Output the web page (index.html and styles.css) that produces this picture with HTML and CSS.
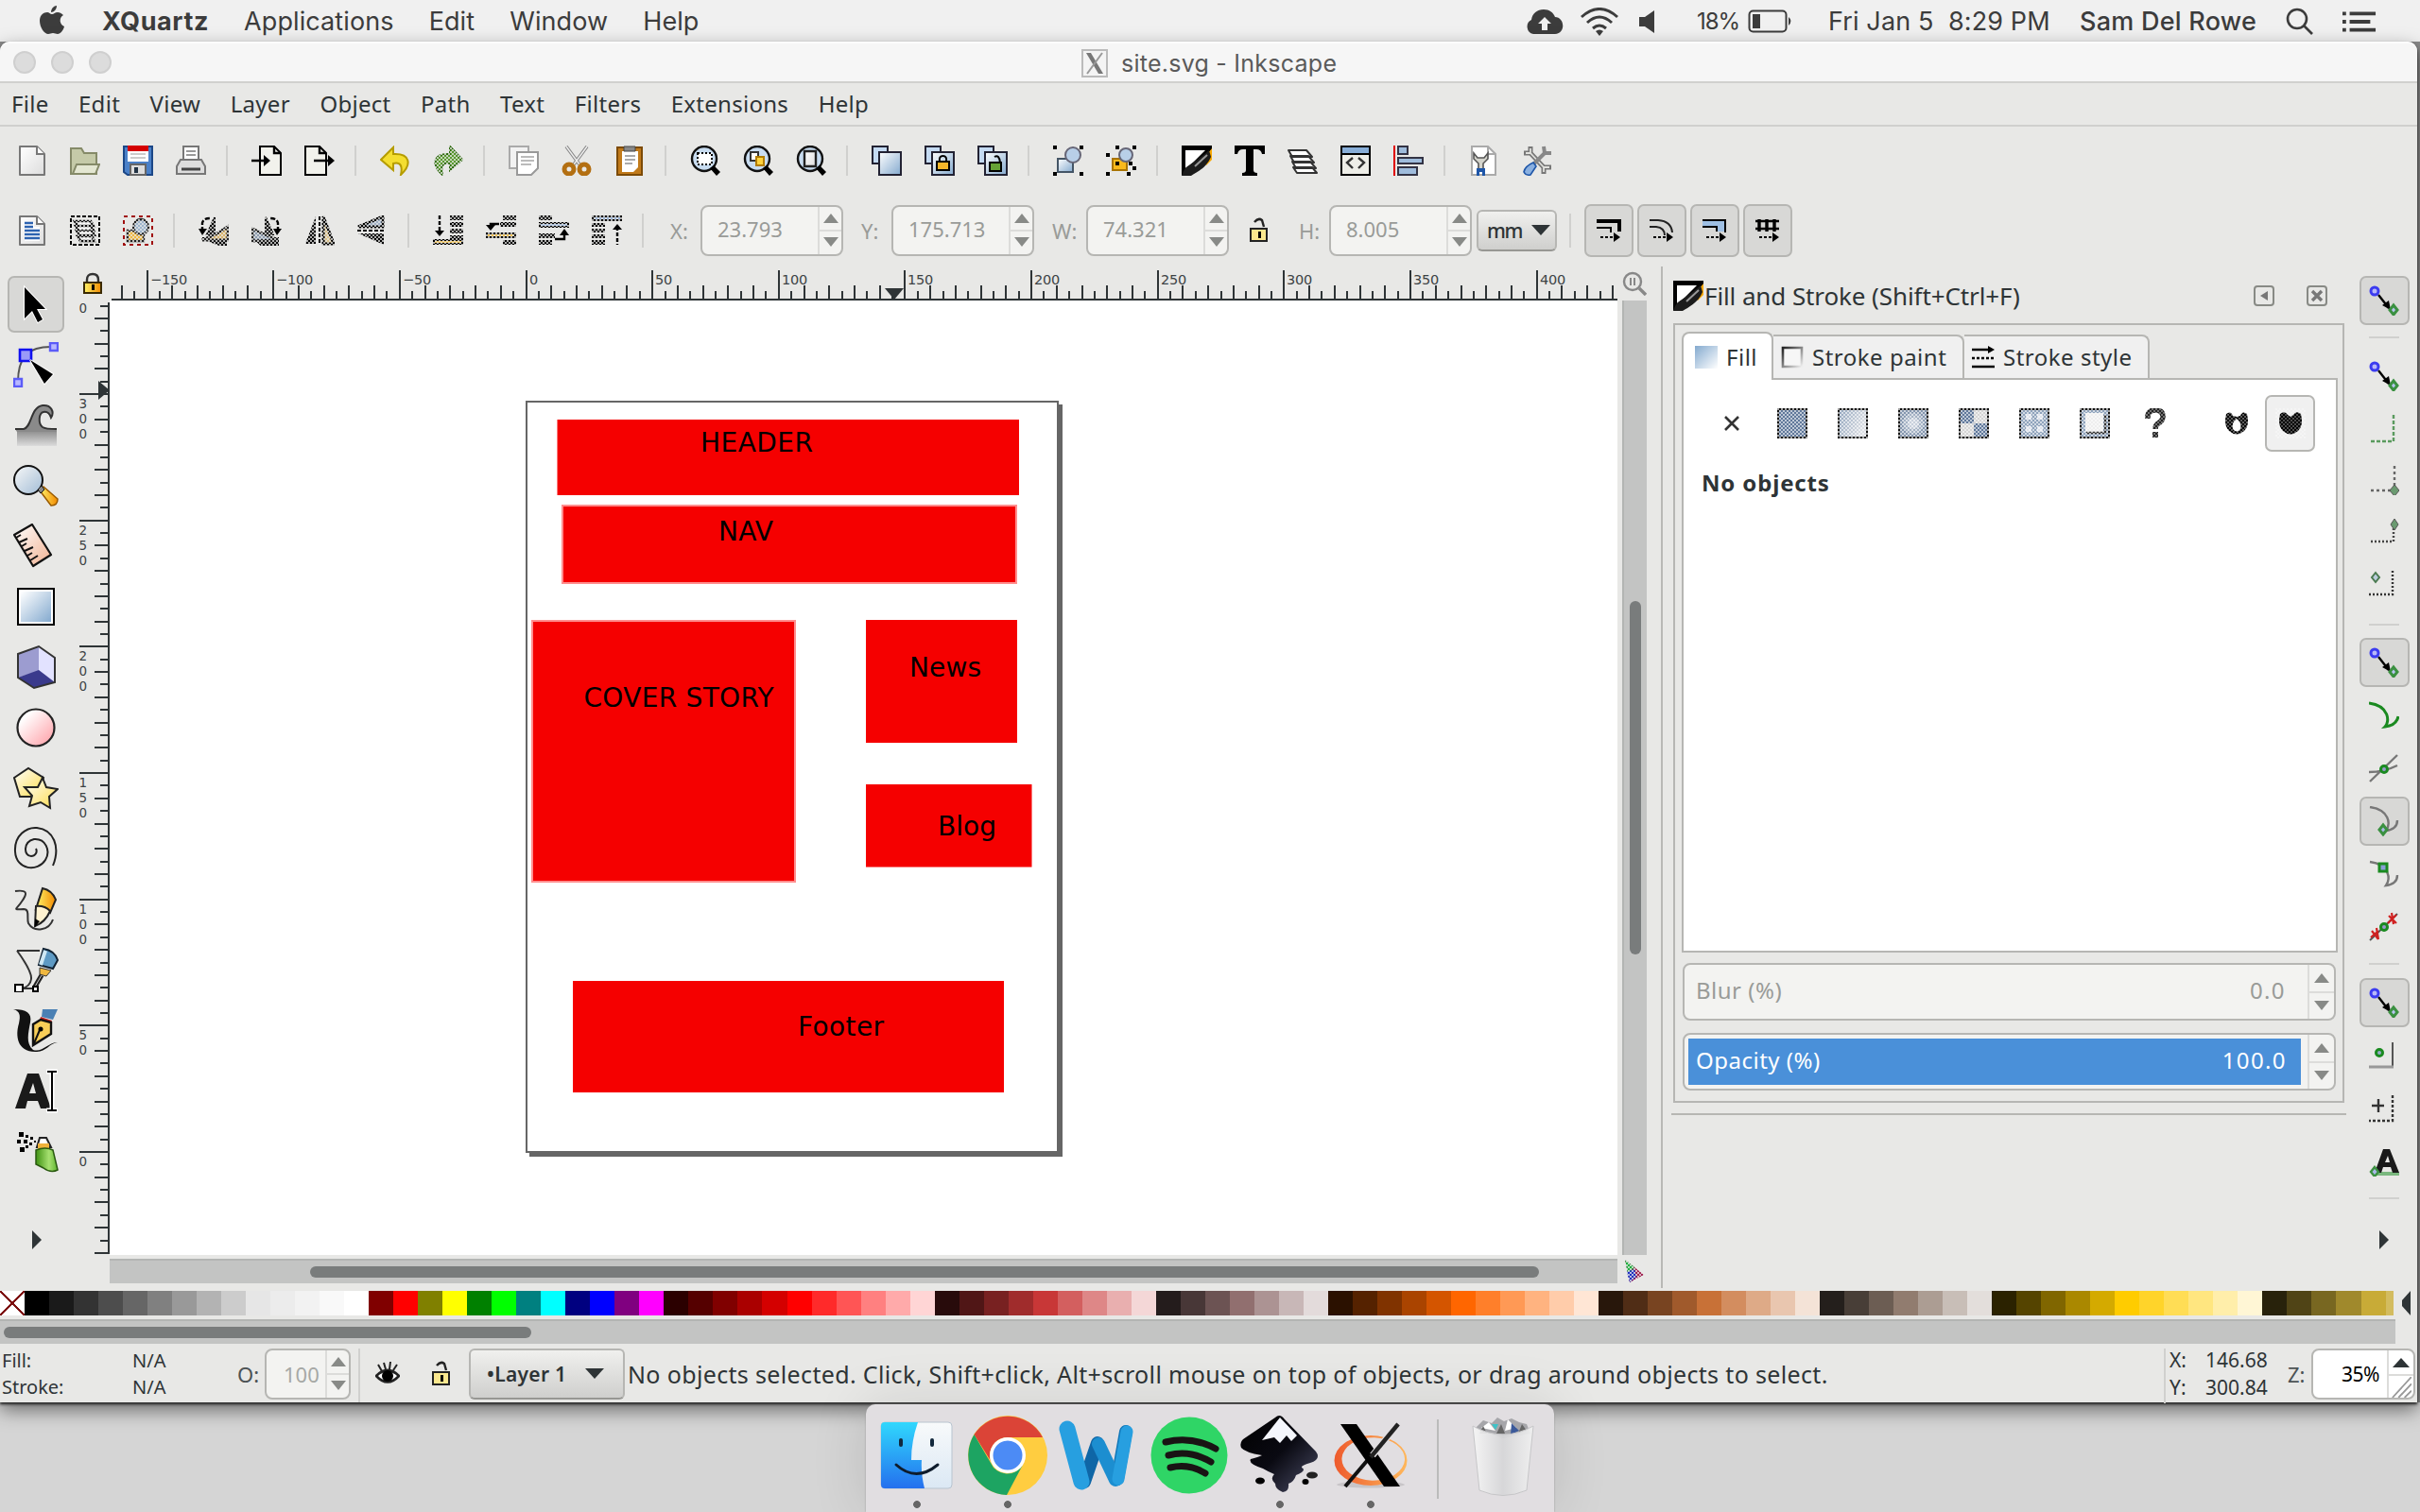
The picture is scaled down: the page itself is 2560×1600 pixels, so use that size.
FILE: index.html
```html
<!DOCTYPE html>
<html lang="en">
<head>
<meta charset="utf-8">
<title>site.svg - Inkscape</title>
<link rel="stylesheet" href="styles.css">
</head>
<body>
<svg class="defs" width="0" height="0" aria-hidden="true">
  <defs>
    <pattern id="dither" width="4" height="4" patternUnits="userSpaceOnUse"><path d="M0 0h2v2H0zM2 2h2v2H2z" fill="#e8e8e6" fill-opacity=".75"/></pattern>
    <pattern id="ditherW" width="4" height="4" patternUnits="userSpaceOnUse"><path d="M0 0h2v2H0zM2 2h2v2H2z" fill="#fff" fill-opacity=".6"/></pattern>
    <linearGradient id="blue" x2="1" y2="1"><stop stop-color="#fff"/><stop offset="1" stop-color="#84aacf"/></linearGradient>
    <linearGradient id="blueR" x1="0" x2="1" y2="1"><stop stop-color="#84aacf"/><stop offset="1" stop-color="#fff"/></linearGradient>
    <linearGradient id="paintGrad" x2="1" y2=".4"><stop stop-color="#8ea2bb"/><stop offset="1" stop-color="#dcdfe4"/></linearGradient>
    <linearGradient id="pink" x2="1" y2="1"><stop offset=".2" stop-color="#fff"/><stop offset="1" stop-color="#ff9aa2"/></linearGradient>
    <linearGradient id="peach" x2="1" y2="1"><stop stop-color="#fff"/><stop offset="1" stop-color="#f0b090"/></linearGradient>
    <linearGradient id="yellow" x2="1" y2="1"><stop stop-color="#fff"/><stop offset="1" stop-color="#fddb4c"/></linearGradient>
    <linearGradient id="orange" x2="1"><stop stop-color="#fff36a"/><stop offset="1" stop-color="#f28a00"/></linearGradient>
    <linearGradient id="green" x2="1"><stop stop-color="#3f9212"/><stop offset=".6" stop-color="#a6e070"/><stop offset="1" stop-color="#5eb52e"/></linearGradient>
    <linearGradient id="frameGrad" x2="1" y2="1"><stop stop-color="#222"/><stop offset="1" stop-color="#eee"/></linearGradient>
    <linearGradient id="wave" x2="0" y2="1"><stop stop-color="#8a8a8a"/><stop offset="1" stop-color="#dcdcdc"/></linearGradient>
    <linearGradient id="paper" x2="1" y2="1"><stop stop-color="#fff"/><stop offset="1" stop-color="#ddd"/></linearGradient>
    <linearGradient id="finderL" x2="0" y2="1"><stop stop-color="#30d8fd"/><stop offset="1" stop-color="#2470ee"/></linearGradient>
    <linearGradient id="finderR" x2="0" y2="1"><stop stop-color="#f8fafb"/><stop offset="1" stop-color="#dbe8f4"/></linearGradient>
    <linearGradient id="ring" x2="1"><stop stop-color="#ee5a2c"/><stop offset="1" stop-color="#ffb85c"/></linearGradient>
    <linearGradient id="ink" x2="1" y2="1"><stop stop-color="#000"/><stop offset=".5" stop-color="#0a0a12"/><stop offset="1" stop-color="#4a4c66"/></linearGradient>
    <linearGradient id="bin" x2="1"><stop stop-color="#f6f6f6"/><stop offset=".5" stop-color="#d6d6d8"/><stop offset="1" stop-color="#f0f0f0"/></linearGradient>
    <symbol id="snap" viewBox="0 0 32 32"><path d="M10 10l11 14" stroke="#000" stroke-width="2.4"/><path d="M23 26l-9-5 7-5z"/><circle cx="6" cy="6" r="4" fill="#b8b8f8" stroke="#3c3cf0" stroke-width="3"/><path d="M26 21l4 5-4 5-4-5z" fill="#b8c4f0" stroke="#3a9040" stroke-width="3"/></symbol>
    <symbol id="doc" viewBox="0 0 32 32"><path d="M3 1h18l8 8v22H3z" fill="url(#paper)" stroke="#777" stroke-width="2" stroke-linejoin="round"/><path d="M21 1v8h8" fill="#fff" stroke="#777" stroke-width="2"/></symbol>
    <symbol id="brush" viewBox="0 0 32 32"><path d="M0 0h32v4L6 26l-6 6z"/><path d="M4 5h21L12 18 4 24z" fill="#fff"/><path d="M32 3v12l-6 6-4-5z" fill="#f8a800"/><path d="M29 5l2 7C26 24 16 28 10 32H0c2-6 4-9 8-11 5-4 12-8 21-16z" fill="#1c1c1c"/><path d="M27 10L14 22" stroke="#999" stroke-width="2"/></symbol>
    <symbol id="lens" viewBox="0 0 32 32"><circle cx="15" cy="14" r="13" fill="#c8dcf0" stroke="#111" stroke-width="2.4"/><path d="M21 24l4-3 7 7-4 4z"/></symbol>
    <symbol id="stack" viewBox="0 0 32 32"><path d="M1 1h16v18H1z" fill="#c4daf2" stroke="#223" stroke-width="2"/><path d="M8 7h23v24H8z" fill="url(#blue)" stroke="#223" stroke-width="2"/></symbol>
    <symbol id="openlock" viewBox="0 0 24 28"><path d="M8 5q4-5 8-2l2 7" fill="none" stroke="#222" stroke-width="2.4"/><path d="M4 12h17v13H4z" fill="#fbe88e" stroke="#222" stroke-width="2"/><path d="M12 15h3v7h-3z"/></symbol>
  </defs>
</svg>

<header class="mac-bar">
  <svg class="apple" viewBox="0 0 26 32"><path d="M18 1c0 4-3 7-6 7 0-4 3-7 6-7z"/><path d="M13 10c2 0 3-2 6-2 2 0 4 1 6 3-5 3-4 10 1 12-1 4-4 8-7 8-2 0-3-1-5-1s-3 1-5 1C5 31 0 24 0 17 0 11 4 8 8 8c2 0 3 2 5 2z"/></svg>
  <nav class="mac-menu"><b>XQuartz</b><span>Applications</span><span>Edit</span><span>Window</span><span>Help</span></nav>
  <div class="mac-status">
    <svg class="cloud" viewBox="0 0 40 28"><path d="M8 27a8 8 0 0 1-2-15C7 5 12 1 19 1c6 0 10 3 12 8 10 0 12 17 0 18z"/><path d="M20 9l-7 7h4v7h6v-7h4z" fill="#f0f0f0"/></svg>
    <svg class="wifi" viewBox="0 0 40 30" fill="none" stroke="#3c3c3c" stroke-width="3"><path d="M1 10q19-17 38 0M7 16q13-12 26 0M13 22q7-6 14 0"/><path d="M20 30l-4-5q4-3 8 0z" fill="#3c3c3c" stroke="none"/></svg>
    <svg class="speaker" viewBox="0 0 16 24"><path d="M0 7h6l10-7v24L6 17H0z"/></svg>
    <span class="percent">18%</span>
    <svg class="battery" viewBox="0 0 48 26"><rect x="1.5" y="1.5" width="39" height="22" rx="4" fill="none" stroke="#3c3c3c" stroke-width="2"/><path d="M5 5h8v15H5zM43 8q5 4 0 9z"/></svg>
    <span class="clock">Fri Jan 5&nbsp; 8:29 PM</span>
    <span class="user">Sam Del Rowe</span>
    <svg class="search" viewBox="0 0 30 30" fill="none" stroke="#3c3c3c" stroke-width="2.6"><circle cx="12" cy="12" r="10"/><path d="M19 19l9 9"/></svg>
    <svg class="list" viewBox="0 0 38 22"><path d="M0 0h4v4H0zM8 0h29v4H8zM0 9h4v4H0zM8 9h23v4H8zM0 18h4v4H0zM8 18h29v4H8z"/></svg>
  </div>
</header>

<main class="window">
  <div class="titlebar">
    <div class="lights"><i></i><i></i><i></i></div>
    <div class="doc-title"><svg viewBox="0 0 28 30"><path d="M1 1h26v28H1z" fill="#f4f4f4" stroke="#bbb" stroke-width="2"/><path d="M5 4h5l13 22h-5z" fill="#777"/><path d="M22 4L6 26" stroke="#999" stroke-width="2"/></svg><span>site.svg - Inkscape</span></div>
  </div>
  <nav class="menubar"><span>File</span><span>Edit</span><span>View</span><span>Layer</span><span>Object</span><span>Path</span><span>Text</span><span>Filters</span><span>Extensions</span><span>Help</span></nav>

  <div class="commands">
    <svg viewBox="0 0 32 32"><use href="#doc"/></svg>
    <svg viewBox="0 0 32 32"><path d="M1 30V3h11l3 5h13v22z" fill="#c5caa8" stroke="#858a68" stroke-width="2"/><path d="M7 20h24l-4 10H3z" fill="#e4e7d2" stroke="#858a68" stroke-width="2"/></svg>
    <svg viewBox="0 0 32 32"><path d="M1 1h30v30H5l-4-3z" fill="#4a80c8" stroke="#1c4787" stroke-width="2"/><path d="M5 2h22v15H5z" fill="#fff"/><path d="M5 0h22v6H5z" fill="#d40000"/><path d="M8 9h16M8 13h16" stroke="#ccc" stroke-width="2"/><path d="M8 20h16v11H8z" fill="#ddd" stroke="#666" stroke-width="2"/><path d="M12 23h4v6h-4z" fill="#234"/></svg>
    <svg viewBox="0 0 32 32"><path d="M8 17V1h16v16z" fill="#fff" stroke="#777" stroke-width="2"/><path d="M11 6h10M11 10h10" stroke="#999" stroke-width="2"/><path d="M5 15h22l4 7v8H1v-8z" fill="#ddd" stroke="#777" stroke-width="2"/><path d="M6 25h20" stroke="#444" stroke-width="3"/></svg>
    <hr>
    <svg viewBox="0 0 32 32"><path d="M9 1h15l7 7v23H9z" fill="#f2f2ec" stroke="#000" stroke-width="2"/><path d="M24 1v7h7M0 16h16" fill="none" stroke="#000" stroke-width="2.4"/><path d="M13 10l7 6-7 6z"/></svg>
    <svg viewBox="0 0 32 32"><path d="M1 1h15l7 7v23H1z" fill="#f2f2ec" stroke="#000" stroke-width="2"/><path d="M16 1v7h7M10 16h17" fill="none" stroke="#000" stroke-width="2.4"/><path d="M25 10l7 6-7 6z"/></svg>
    <hr>
    <svg viewBox="0 0 32 32"><path d="M14 2L1 15l13 11v-7c8-2 10 3 8 12 12-11 10-23-8-22z" fill="#f4de30" stroke="#b59c00" stroke-width="2"/></svg>
    <svg viewBox="0 0 32 32"><path d="M18 1l13 14-13 11v-7c-8-2-10 3-8 12C-2 20 0 8 18 9z" fill="#5a9a30" stroke="#2f6a10" stroke-width="2"/><path d="M0 0h32v32H0z" fill="url(#dither)"/></svg>
    <hr>
    <svg viewBox="0 0 32 32"><path d="M1 1h20v23H1z" fill="#f2f2f2" stroke="#aaa" stroke-width="2"/><path d="M9 7h22v17l-7 7H9z" fill="#fff" stroke="#999" stroke-width="2"/><path d="M13 12h14M13 16h14M13 20h11" stroke="#bbb" stroke-width="2"/></svg>
    <svg viewBox="0 0 32 32"><path d="M5 1l14 19M27 1L13 20" stroke="#888" stroke-width="3.6"/><path d="M5 1l14 19M27 1L13 20" stroke="#eee" stroke-width="1.4"/><circle cx="8" cy="25" r="5" fill="none" stroke="#b36f12" stroke-width="5"/><circle cx="24" cy="25" r="5" fill="none" stroke="#b36f12" stroke-width="5"/></svg>
    <svg viewBox="0 0 32 32"><path d="M3 2h26v29H3z" fill="#c17a1a" stroke="#7c4a05" stroke-width="2"/><path d="M8 6h17v17l-5 5H8z" fill="#fff"/><path d="M10 1h12v5H10z" fill="#888" stroke="#444"/><path d="M11 11h11M11 15h11M11 19h8" stroke="#aaa" stroke-width="2"/></svg>
    <hr>
    <svg viewBox="0 0 32 32"><use href="#lens"/><path d="M8 8h15v12H8z" fill="#fff" stroke="#000" stroke-width="2" stroke-dasharray="2 2"/></svg>
    <svg viewBox="0 0 32 32"><use href="#lens"/><path d="M8 7h8v9H8z" fill="#fff" stroke="#333" stroke-width="2"/><path d="M14 12h8v9h-8z" fill="#ffd23c" stroke="#b27c00" stroke-width="2"/></svg>
    <svg viewBox="0 0 32 32"><use href="#lens"/><path d="M9 6h12v16H9z" fill="url(#paper)" stroke="#222" stroke-width="2.4"/></svg>
    <hr>
    <svg viewBox="0 0 32 32"><use href="#stack"/></svg>
    <svg viewBox="0 0 32 32"><use href="#stack"/><path d="M13 17h13v9H13z" fill="#f4b62a" stroke="#000" stroke-width="2"/><path d="M16 17q-1-6 3.500-6t3.500 6" fill="none" stroke="#000" stroke-width="2"/></svg>
    <svg viewBox="0 0 32 32"><use href="#stack"/><path d="M13 18h12v9H13z" fill="#66a336" stroke="#000" stroke-width="2"/><path d="M18 12q5-3 6 6" fill="none" stroke="#000" stroke-width="2"/></svg>
    <hr>
    <svg viewBox="0 0 32 32"><path d="M5 14h16v14H5z" fill="url(#blue)" stroke="#456" stroke-width="2"/><circle cx="21" cy="10" r="8" fill="#b8cfe8" stroke="#667" stroke-width="2"/><path d="M0 0h4v4H0zM28 0h4v4h-4zM0 28h4v4H0zM28 28h4v4h-4z"/></svg>
    <svg viewBox="0 0 32 32"><path d="M7 14h15v12H7z" fill="#f9b91c" stroke="#a97400" stroke-width="2"/><circle cx="21" cy="10" r="7" fill="#b8cfe8" stroke="#667" stroke-width="2"/><path d="M10 0h4v4h-4zM28 0h4v4h-4zM0 8h4v4H0zM24 17h4v4h-4zM10 17h4v4h-4zM0 28h4v4H0zM22 28h4v4h-4zM28 22h4v4h-4z"/></svg>
    <hr>
    <svg viewBox="0 0 32 32"><use href="#brush"/></svg>
    <svg viewBox="0 0 32 32"><path d="M0 0h32v9h-3q-1-5-6-5h-3v22q0 3 4 3v3H8v-3q4 0 4-3V4H9Q4 4 3 9H0z"/></svg>
    <svg viewBox="0 0 32 32" fill="#fff" stroke="#333" stroke-width="2" stroke-linejoin="round"><path d="M6 23h20l5 6H10zM5 17h19l6 7H9zM3 11h19l6 7H7zM1 5h19l6 7H5z"/></svg>
    <svg viewBox="0 0 32 32"><path d="M1 1h30v30H1z" fill="#eeeee8" stroke="#000" stroke-width="2"/><path d="M2 2h28v6H2z" fill="#88aed8"/><path d="M0 9h32" stroke="#000" stroke-width="2"/><path d="M13 13l-6 5 6 6M19 13l6 5-6 6" fill="none" stroke="#333" stroke-width="2.4"/></svg>
    <svg viewBox="0 0 32 32"><path d="M1 0v32" stroke="#e00000" stroke-width="2"/><path d="M5 1h10v8H5zM5 13h26v6H5zM5 23h20v8H5z" fill="#9fbcdc" stroke="#334" stroke-width="2"/></svg>
    <hr>
    <svg viewBox="0 0 32 32"><path d="M3 1h17l8 8v22H3z" fill="#fff" stroke="#aaa" stroke-width="2"/><path d="M20 1v8h8" fill="none" stroke="#aaa" stroke-width="2"/><path d="M5 8v6l5 5v6h5v-6l5-5V8l-4 5h-7z" fill="#d4d4cc" stroke="#555" stroke-width="1.600"/><path d="M8 24h9v8h-3v-4h-3v4H8z" fill="#1e56a8"/></svg>
    <svg viewBox="0 0 32 32" fill="none"><path d="M9 1v7H2M9 8l14 15M23 30v-7h8" stroke="#777" stroke-width="5"/><path d="M9 3v5H4M9 8l14 15M23 28v-5h6" stroke="#e0e0dc" stroke-width="1.800"/><path d="M23 1l1 7h7M24 8L13 19" stroke="#888" stroke-width="4"/><path d="M12 18l3 4-6 9q-5 1-7-3 1-6 10-10z" fill="#8ab0e0" stroke="#1e56a8" stroke-width="1.600"/></svg>
  </div>

  <div class="controls">
    <svg viewBox="0 0 32 32"><use href="#doc"/><path d="M8 7h10v5h6v15H8z" fill="#fff"/><path d="M8 8h9M8 12h9M8 16h16M8 20h16M8 24h16" stroke="#2c62b0" stroke-width="2.600"/></svg>
    <svg viewBox="0 0 32 32"><path d="M1 1h30v30H1z" fill="none" stroke="#000" stroke-width="2" stroke-dasharray="4 2"/><path d="M8 22h15l3 5H11zM7 16h16l3 5H10zM6 11h16l3 5H9zM5 6h17l3 5H8z" fill="#fff" stroke="#111" stroke-width="2.600"/><path d="M4 4h24v24H4z" fill="url(#dither)"/></svg>
    <svg viewBox="0 0 32 32"><path d="M1 1h30v30H1z" fill="none" stroke="#a01010" stroke-width="2" stroke-dasharray="4 4"/><path d="M5 16h17v11H5z" fill="#f0b840" stroke="#222" stroke-width="2.400"/><circle cx="19" cy="12" r="8" fill="#9db4cc" stroke="#222" stroke-width="2.400"/><path d="M4 4h24v24H4z" fill="url(#dither)"/></svg>
    <hr>
    <svg viewBox="0 0 32 32"><path d="M17 2v18h-8zM4 24h25v7H22z" stroke="#000" stroke-width="2"/><path d="M18 20l13-8v14L4 26z" fill="#d9b36a" stroke="#222" stroke-width="3"/><path d="M0 0h32v32H0z" fill="url(#dither)"/><path d="M4 17V8q1-5 8-5" fill="none" stroke="#000" stroke-width="2.400" stroke-dasharray="5 2"/><path d="M0 14h9l-5 7z"/></svg>
    <svg viewBox="0 0 32 32"><path d="M15 2v18h8zM3 24h25v7H10z" stroke="#000" stroke-width="2"/><path d="M14 20L1 14v13l27-1z" fill="#8c9cb0" stroke="#222" stroke-width="3"/><path d="M0 0h32v32H0z" fill="url(#dither)"/><path d="M28 17V8q-1-5-8-5" fill="none" stroke="#000" stroke-width="2.400" stroke-dasharray="5 2"/><path d="M23 14h9l-5 7z"/></svg>
    <svg viewBox="0 0 32 32"><path d="M12 1v29H1z"/><path d="M20 1v29h11z" fill="#d9c08a" stroke="#000" stroke-width="3"/><path d="M0 0h32v32H0z" fill="url(#dither)"/><path d="M16 1v30" stroke="#000" stroke-width="2" stroke-dasharray="4 2"/></svg>
    <svg viewBox="0 0 32 32"><path d="M27 12V1L1 12z" fill="#9fb0c6" stroke="#000" stroke-width="3"/><path d="M28 19v12L1 19z"/><path d="M0 0h32v32H0z" fill="url(#dither)"/><path d="M0 16h28" stroke="#000" stroke-width="2" stroke-dasharray="4 2"/></svg>
    <hr>
    <svg viewBox="0 0 32 32"><path d="M18 0h14v5H18zM18 7h14v5H18zM18 14h14v5H18zM18 21h14v4H18zM0 25h32v6H0z"/><path d="M2 27h28v2H2z" fill="#f0c050"/><path d="M0 0h32v32H0z" fill="url(#dither)"/><path d="M7 0v18" stroke="#000" stroke-width="2.400" stroke-dasharray="4 2"/><path d="M2 16h10l-5 6z"/></svg>
    <svg viewBox="0 0 32 32"><path d="M18 0h14v5H18zM15 7h17v5H15zM0 18h32v6H0zM18 26h14v5H18z"/><path d="M2 20h28v2H2z" fill="#f0c050"/><path d="M0 0h32v32H0z" fill="url(#dither)"/><path d="M14 9H5v4" fill="none" stroke="#000" stroke-width="2.400"/><path d="M0 10h10l-5 6z"/></svg>
    <svg viewBox="0 0 32 32"><path d="M0 0h14v5H0zM0 7h32v6H0zM0 19h17v5H0zM0 26h14v5H0z"/><path d="M2 9h28v2H2z" fill="#9ab4d8"/><path d="M0 0h32v32H0z" fill="url(#dither)"/><path d="M17 25h10v-5" fill="none" stroke="#000" stroke-width="2.400"/><path d="M22 21h10l-5-7z"/></svg>
    <svg viewBox="0 0 32 32"><path d="M0 0h32v6H0zM0 8h14v4H0zM0 14h14v4H0zM0 20h14v4H0zM0 26h14v5H0z"/><path d="M2 2h28v2H2z" fill="#9ab4d8"/><path d="M0 0h32v32H0z" fill="url(#dither)"/><path d="M27 12v19" stroke="#000" stroke-width="2.400" stroke-dasharray="4 2"/><path d="M22 15h10l-5-6z"/></svg>
    <hr>
    <label class="lx">X:</label><div class="spin"><span>23.793</span><i></i></div>
    <label class="ly">Y:</label><div class="spin"><span>175.713</span><i></i></div>
    <label class="lw">W:</label><div class="spin"><span>74.321</span><i></i></div>
    <svg class="lock" viewBox="0 0 24 28"><use href="#openlock"/></svg>
    <label class="lh">H:</label><div class="spin"><span>8.005</span><i></i></div>
    <div class="unit"><span>mm</span><b class="down"></b></div>
    <hr class="last">
    <div class="toggles">
      <button><svg viewBox="0 0 26 24"><path d="M0 2h24v11" fill="none" stroke="#000" stroke-width="4"/><path d="M0 9h15v5" fill="none" stroke="#000" stroke-width="2"/><path d="M4 19h14" stroke="#000" stroke-width="2" stroke-dasharray="3 2"/><path d="M18 14l7 5-7 5z"/></svg></button>
      <button><svg viewBox="0 0 26 24"><path d="M0 1h9q14 1 15 13M0 8h7q9 1 9 9" fill="none" stroke="#222" stroke-width="2"/><path d="M4 19h14" stroke="#000" stroke-width="2" stroke-dasharray="3 2"/><path d="M18 14l7 5-7 5z"/></svg></button>
      <button><svg viewBox="0 0 26 24"><path d="M0 1h24v12h-8V8H0z" fill="#9fc0e4"/><path d="M0 1h24v13M0 8h15v5" fill="none" stroke="#000" stroke-width="2"/><path d="M4 19h14" stroke="#000" stroke-width="2" stroke-dasharray="3 2"/><path d="M18 14l7 5-7 5z"/></svg></button>
      <button><svg viewBox="0 0 26 24"><path d="M0 2h25M0 10h25" stroke="#000" stroke-width="2.400"/><path d="M4 0v13M12 0v13M20 0v13" stroke="#000" stroke-width="3.400"/><path d="M4 19h14" stroke="#000" stroke-width="2" stroke-dasharray="3 2"/><path d="M18 14l7 5-7 5z"/></svg></button>
    </div>
  </div>

  <div class="work">
    <aside class="toolbox">
      <div class="on"><svg viewBox="0 0 48 48"><path d="M12 6v33l8-8 6 12 5-3-6-11h9z" stroke="#fff" stroke-width="2" paint-order="stroke"/></svg></div>
      <div><svg viewBox="0 0 48 48"><path d="M5 42Q5 24 13 13 24 4 43 5" fill="none" stroke="#555" stroke-width="2"/><path d="M7 8h12v12H7z" fill="#9a9af8" stroke="#1010f0" stroke-width="2.600"/><path d="M39 1h8v8h-8zM1 39h8v8H1z" fill="#b8b8ff" stroke="#5c5cf8" stroke-width="2.400"/><path d="M18 19l24 15-9 10z" stroke="#fff" stroke-width="2" paint-order="stroke"/></svg></div>
      <div><svg viewBox="0 0 48 48"><path d="M4 29h42v17H4z" fill="url(#wave)"/><path d="M2 28h9c9-2 7-23 20-25 9-1 13 7 9 13-2-2-3-6-8-6-5 1-6 11-1 16 3 2 8 2 15 2v3H4z" fill="#8a8a8a"/><path d="M2 28h9c9-2 7-23 20-25 9-1 13 7 9 13-1-3-3-7-8-6-5 1-6 12-1 16 3 2 8 2 15 2" fill="none" stroke="#333" stroke-width="2"/></svg></div>
      <div><svg viewBox="0 0 48 48"><path d="M28 29l4-4 15 13q0 7-7 7z" fill="url(#orange)" stroke="#9a5a00" stroke-width="1.500"/><circle cx="16" cy="18" r="15" fill="url(#blue)" fill-opacity=".7" stroke="#111" stroke-width="2"/><path d="M26 28l4-4 3 4-4 4z" fill="#888" stroke="#111"/></svg></div>
      <div><svg viewBox="0 0 48 48"><path d="M1 12L20 1l20 32-19 12z" fill="url(#peach)" stroke="#111" stroke-width="2.200" stroke-linejoin="round"/><path d="M3 15l5-3M6 20l9-4M9 24l5-3M12 29l9-4M15 34l5-3M18 39l8-5" stroke="#111" stroke-width="2"/></svg></div>
      <div><svg viewBox="0 0 48 48"><path d="M5 5h38v38H5z" fill="#fff" stroke="#000" stroke-width="2"/><path d="M8 8h32v32H8z" fill="url(#blue)"/></svg></div>
      <div><svg viewBox="0 0 48 48"><path d="M5 10L27 2v26L5 35z" fill="#9c9cd0"/><path d="M27 2l17 12v26L27 28z" fill="#e2e2ff"/><path d="M5 35l22-8 17 13-22 6z" fill="#3a3a8c"/><path d="M5 10L27 2l17 12v26L22 46 5 35z" fill="none" stroke="#333" stroke-width="2"/></svg></div>
      <div><svg viewBox="0 0 48 48"><circle cx="24" cy="24" r="19.500" fill="url(#pink)" stroke="#222" stroke-width="2.200"/></svg></div>
      <div><svg viewBox="0 0 48 48"><path d="M1 13L16 3l16 10-6 20H7z" fill="url(#yellow)" stroke="#222" stroke-width="2"/><path d="M31 13l4 10 12 2-9 8 1 12-10-6-12 4 3-11-8-9h14z" fill="url(#yellow)" stroke="#222" stroke-width="2"/></svg></div>
      <div><svg viewBox="0 0 48 48" fill="none" stroke="#222" stroke-width="2"><path d="M24 24c2 4-1 8-5 8-8 0-9-15 3-18 12-1 18 12 12 22-8 13-31 11-32-9C1 10 14 1 25 2c18 2 25 20 17 40"/></svg></div>
      <div><svg viewBox="0 0 48 48"><path d="M2 5c15-2 12 4 7 11-5 8-11 9 2 8 7 0 3 10 5 15 6 10 22 8 26-4" fill="none" stroke="#333" stroke-width="2"/><path d="M31 2q10 2 14 12l-6 14q-8-6-15-4z" fill="url(#orange)" stroke="#222" stroke-width="2"/><path d="M24 21q9-1 15 5-5 12-16 16z" fill="#fff2cf" stroke="#222" stroke-width="2"/><path d="M23 34l5 3-5 6z"/></svg></div>
      <div><svg viewBox="0 0 48 48"><path d="M4 4h24M4 4q16 22 15 30-1 8-10 10h14" fill="none" stroke="#333" stroke-width="2"/><path d="M32 2q12 2 15 12l-5 9-15-4z" fill="#5e9ac4" stroke="#123" stroke-width="2"/><path d="M34 4l-5 15" stroke="#cfe8f4" stroke-width="4"/><path d="M28 22l12 3-5 6-7-2z" fill="#f0b840" stroke="#333"/><path d="M30 30l-7 12" stroke="#222" stroke-width="5"/><path d="M30 30l-7 12" stroke="#ccc"/><path d="M2 40h8v8H2zM21 42h5v5h-5z" fill="#fff" stroke="#000" stroke-width="2"/></svg></div>
      <div><svg viewBox="0 0 48 48"><path d="M0 2c14 0 20 4 18 14-2 11-5 22 3 29 10 3 16-8 26-8-9 1-12 10-22 10C4 48 2 30 6 17 8 8 7 4 0 2z" fill="#111"/><path d="M31 2h16l-5 11-12-3z" fill="#4a80b4"/><path d="M29 10l12 4-2 4-11-4z" fill="#c02020"/><path d="M21 40V18l8-5 11 3v12z" fill="#f8ce58" stroke="#111" stroke-width="2.400"/><path d="M22 38l6-14" stroke="#111" stroke-width="2"/><circle cx="29" cy="23" r="2.500"/></svg></div>
      <div><svg viewBox="0 0 48 48"><path d="M2 43L15 6h12l13 37H29l-3-8H15l-2 8zM17 27h7l-3-11z" fill="#1a1a1a" fill-rule="evenodd"/><path d="M41 5v40M35 4h12M35 45h12" stroke="#fff" stroke-width="5"/><path d="M41 5v40M36 4h10M36 45h10" stroke="#000" stroke-width="2"/></svg></div>
      <div><svg viewBox="0 0 48 48"><path d="M6 4h5v5H6zM4 12h4v4H4zM7 20h5v5H7zM11 12h4v4h-4zM13 7h3v3h-3zM18 9h3v3h-3zM17 15h3v3h-3zM13 18h3v3h-3zM22 13h2v2h-2z"/><path d="M25 20l3-10h7l5 10z" fill="#fff" stroke="#222" stroke-width="2"/><path d="M26 16h12v7H26z" fill="#f0b23c"/><path d="M24 23q10-4 18 0l5 21q-7 4-15-2l-8-4z" fill="url(#green)" stroke="#2a5a10" stroke-width="1.500"/></svg></div>
      <b class="right"></b>
    </aside>

    <section class="canvas-area">
      <div class="corner"><svg viewBox="0 0 22 24"><path d="M5 12V8q0-6 6-6t6 6v4" fill="none" stroke="#333" stroke-width="2.400"/><path d="M2 11h18v11H2z" fill="url(#orange)" stroke="#3a2a00" stroke-width="2"/><path d="M10 13h3v6h-3z"/></svg></div>
      <svg class="ruler-h" viewBox="116 282 1595 36"><g id="ticks-h"></g><path d="M118 316h1593v2H118z"/><path d="M936 305h20l-10 12z"/></svg>
      <div class="corner zoom"><svg viewBox="0 0 26 26" fill="none" stroke="#888"><circle cx="11" cy="11" r="9" stroke-width="2.400"/><path d="M18 18l7 7" stroke-width="3.400"/><path d="M9 7v8M13 7v8" stroke-width="2"/></svg></div>
      <svg class="ruler-v" viewBox="76 318 40 1010"><g id="ticks-v"></g><path d="M114 320h2v1007h-2z"/><path d="M104 403v20l12-10z"/></svg>
      <svg class="canvas" viewBox="116 318 1595 1010">
        <path d="M560 428h564v796H560z" fill="#666"/>
        <path d="M557 425h562v794H557z" fill="#fff" stroke="#666" stroke-width="2"/>
        <g fill="#f50000">
          <path d="M589.500 444h488.500v80h-488.500z"/>
          <path d="M595 535h481v82h-481z"/>
          <path d="M563 657h278v276h-278z"/>
          <path d="M916 656h160v130h-160z"/>
          <path d="M916 830h175.500v87.500h-175.500z"/>
          <path d="M606 1038h456v118h-456z"/>
        </g>
        <path d="M595 535h480v82h-480zM563 657h278v276h-278z" fill="none" stroke="#ff8e8e" stroke-width="2"/>
        <g class="art">
          <text x="741" y="478" textLength="119">HEADER</text>
          <text x="760" y="572" textLength="58">NAV</text>
          <text x="617.500" y="748" textLength="201">COVER STORY</text>
          <text x="962" y="716" textLength="76">News</text>
          <text x="992" y="884" textLength="62">Blog</text>
          <text x="844" y="1096" textLength="91">Footer</text>
        </g>
      </svg>
      <div class="vscroll"><i></i></div>
      <div class="hscroll"><i></i></div>
      <div class="cms"><svg viewBox="0 0 22 26"><path d="M1 1l20 16L6 25z" fill="#a02050"/><path d="M1 1l10 8-7 7z" fill="#20b040"/><path d="M3 14l8-3 2 8-7 6z" fill="#2030c0"/><path d="M0 0h22v26H0z" fill="url(#dither)"/></svg></div>
    </section>

    <section class="dock-panel">
      <div class="panel-title"><svg viewBox="0 0 32 32"><use href="#brush"/></svg><span>Fill and Stroke (Shift+Ctrl+F)</span>
        <svg class="pbtn" viewBox="0 0 22 22"><rect x="1" y="1" width="20" height="20" rx="3" fill="none" stroke="#888a85" stroke-width="2"/><path d="M15 6v10l-8-5z" fill="#777"/></svg>
        <svg class="pbtn" viewBox="0 0 22 22"><rect x="1" y="1" width="20" height="20" rx="3" fill="none" stroke="#888a85" stroke-width="2"/><path d="M6 6l10 10M16 6L6 16" stroke="#777" stroke-width="3.400"/></svg></div>
      <div class="frame">
        <div class="tabs">
          <div class="tab active"><svg viewBox="0 0 24 24"><path d="M0 0h24v24H0z" fill="url(#blueR)"/></svg><span>Fill</span></div>
          <div class="tab"><svg viewBox="0 0 24 24"><path d="M2 2h20v20H2z" fill="#f6f6f6" stroke="url(#frameGrad)" stroke-width="2.600"/></svg><span>Stroke paint</span></div>
          <div class="tab"><svg viewBox="0 0 24 24"><path d="M0 4h18M0 22h24" stroke="#000" stroke-width="2.400"/><path d="M0 13h24" stroke="#000" stroke-width="2.400" stroke-dasharray="3 2"/><path d="M17 0l7 4-7 4z"/></svg><span>Stroke style</span></div>
        </div>
        <div class="page">
          <div class="paints">
            <svg viewBox="0 0 32 32"><path d="M9 9l14 14M23 9L9 23" stroke="#333" stroke-width="2.600"/></svg>
            <svg viewBox="0 0 32 32"><path d="M1 1h30v30H1z" fill="#60789a" stroke="#111" stroke-width="2"/><path d="M0 0h32v32H0z" fill="url(#ditherW)"/></svg>
            <svg viewBox="0 0 32 32"><path d="M1 1h30v30H1z" fill="url(#paintGrad)" stroke="#111" stroke-width="2"/><path d="M0 0h32v32H0z" fill="url(#ditherW)"/></svg>
            <svg viewBox="0 0 32 32"><path d="M1 1h30v30H1z" fill="#8496ae" stroke="#111" stroke-width="2"/><circle cx="16" cy="16" r="11" fill="#a4b2c4"/><circle cx="16" cy="16" r="6" fill="#c8d0dc"/><path d="M0 0h32v32H0z" fill="url(#ditherW)"/></svg>
            <svg viewBox="0 0 32 32"><path d="M1 1h30v30H1z" fill="#d4d4d4" stroke="#111" stroke-width="2"/><path d="M2 2h14v14H2zM16 16h14v14H16z" fill="#60789a"/><path d="M0 0h32v32H0z" fill="url(#ditherW)"/></svg>
            <svg viewBox="0 0 32 32"><path d="M1 1h30v30H1z" fill="#8ea2bb" stroke="#111" stroke-width="2"/><path d="M7 6h6v6H7zM19 6h6v6h-6zM7 19h6v6H7zM19 19h6v6h-6z" fill="#dde2ea"/><path d="M0 0h32v32H0z" fill="url(#ditherW)"/></svg>
            <svg viewBox="0 0 32 32"><path d="M1 1h30v30H1z" fill="#8ea2bb" stroke="#111" stroke-width="2"/><path d="M6 5h19v20H6z" fill="#eee"/><path d="M7 26h20V7" fill="none" stroke="#333" stroke-width="2.400"/><path d="M0 0h32v32H0z" fill="url(#ditherW)"/></svg>
            <svg viewBox="0 0 32 32"><path d="M8 11V8q1-6 8-6 8 0 8 7 0 4-5 7-3 2-3 6" fill="none" stroke="#222" stroke-width="5.600"/><path d="M13 25h6v6h-6z" fill="#222"/><path d="M0 0h32v32H0z" fill="url(#ditherW)" opacity=".6"/></svg>
            <svg class="gap" viewBox="0 0 32 32"><path d="M5 6q5-4 7 2l4 1 4-1q2-6 7-2 3 12-3 18-8 7-16 0Q2 18 5 6zM16 11q-6 5-4 11 4 5 8 0 2-6-4-11z" fill="#000" fill-rule="evenodd"/><path d="M0 0h32v32H0z" fill="url(#ditherW)" opacity=".6"/></svg>
            <button><svg viewBox="0 0 32 32"><path d="M5 6q5-4 8 1l3 2 3-2q3-5 8-1 3 12-3 18-8 7-16 0Q2 18 5 6z" fill="#000"/><path d="M0 0h32v32H0z" fill="url(#ditherW)" opacity=".5"/></svg></button>
          </div>
          <b class="none">No objects</b>
        </div>
        <div class="slider"><div class="bar"><span>Blur (%)</span><span>0.0</span></div><i></i></div>
        <div class="slider opacity"><div class="bar"><span>Opacity (%)</span><span>100.0</span></div><i></i></div>
      </div>
      <div class="rule"></div>
    </section>

    <aside class="snapbar">
      <button><svg viewBox="0 0 32 32"><use href="#snap"/></svg></button>
      <hr>
      <div class="nodes">
        <svg viewBox="0 0 32 32"><use href="#snap"/></svg>
        <svg viewBox="0 0 32 32"><path d="M26 2v28H0" fill="none" stroke="#5a9a5e" stroke-width="2.400" stroke-dasharray="4 2"/></svg>
        <svg viewBox="0 0 32 32"><path d="M27 1v26H0" fill="none" stroke="#666" stroke-width="2.400" stroke-dasharray="3 3"/><path d="M27 21l5 6-5 6-5-6z" fill="#6a9a70" stroke="#555"/></svg>
        <svg viewBox="0 0 32 32"><path d="M26 8v18H0" fill="none" stroke="#444" stroke-width="2.400" stroke-dasharray="2 2"/><path d="M27 2l4 6-4 6-4-6z" fill="#6a9a70" stroke="#555"/></svg>
        <svg viewBox="0 0 32 32"><path d="M25 2v25H0" fill="none" stroke="#333" stroke-width="2.400" stroke-dasharray="2 2"/><path d="M7 4l4 5-4 5-4-5z" fill="#bcd" stroke="#4a7a50" stroke-width="2"/></svg>
      </div>
      <hr class="wide">
      <button><svg viewBox="0 0 32 32"><use href="#snap"/></svg></button>
      <svg viewBox="0 0 32 32"><path d="M0 3c22 3 22 20 17 25 10-1 13-6 14-11" fill="none" stroke="#1a8a20" stroke-width="3"/></svg>
      <svg viewBox="0 0 32 32"><path d="M1 30L30 2M0 20q16 0 30-7" fill="none" stroke="#777" stroke-width="2.400"/><circle cx="16" cy="17" r="3.500" fill="#99c" stroke="#1a8a20" stroke-width="3"/></svg>
      <button><svg viewBox="0 0 32 32"><path d="M1 1c21 3 22 18 17 25 8-1 12-5 12-11" fill="none" stroke="#777" stroke-width="2.400"/><path d="M15 20l4 5-4 5-4-5z" fill="#aab8e8" stroke="#3a9040" stroke-width="3"/></svg></button>
      <svg viewBox="0 0 32 32"><path d="M1 3c21 3 22 18 17 25 8-1 12-5 12-11" fill="none" stroke="#777" stroke-width="2.400"/><path d="M11 5h8v8h-8z" fill="#8aa0d8" stroke="#1a8a20" stroke-width="3"/></svg>
      <svg viewBox="0 0 32 32"><path d="M1 30L30 2" stroke="#555" stroke-width="2"/><path d="M3 20l7 9M2 27l8-7M8 17l2 12M21 4l8 8M20 12l9-9M24 1l2 12" stroke="#d02020" stroke-width="2.200"/><circle cx="16" cy="16" r="3.500" fill="#99c" stroke="#1a8a20" stroke-width="3"/></svg>
      <hr>
      <button><svg viewBox="0 0 32 32"><use href="#snap"/></svg></button>
      <svg viewBox="0 0 32 32"><path d="M25 2v27" stroke="#555" stroke-width="2"/><path d="M0 28h26" stroke="#999" stroke-width="3"/><circle cx="11" cy="13" r="3.500" fill="#9ac" stroke="#1a8a20" stroke-width="3"/></svg>
      <svg viewBox="0 0 32 32"><path d="M25 2v27H0" fill="none" stroke="#333" stroke-width="2.400" stroke-dasharray="3 2"/><path d="M3 13h13M10 6v14" stroke="#333" stroke-width="2.400"/></svg>
      <svg viewBox="0 0 32 32"><path d="M4 27h28v4H4z" fill="#7ab87e"/><path d="M6 28L15 3h7l10 25h-7l-2-6h-8l-2 6zM17 17h5l-2-7z" fill="#1a1a1a" fill-rule="evenodd"/><path d="M6 22l4 5-4 5-4-5z" fill="#aab8e8" stroke="#3a9040" stroke-width="2.400"/></svg>
      <hr>
      <b class="right"></b>
    </aside>
  </div>

  <div class="palette"><div id="swatches"></div><b class="left"></b></div>
  <div class="pal-scroll"><i></i></div>

  <footer class="status">
    <div class="style-ind"><span>Fill:</span><span>N/A</span><span>Stroke:</span><span>N/A</span></div>
    <label class="lo">O:</label><div class="spin small"><span>100</span><i></i></div>
    <hr>
    <svg class="eye" viewBox="0 0 26 28"><path d="M1 16q12-12 24 0-12 13-24 0z" fill="#fff" stroke="#222" stroke-width="2.600"/><circle cx="13" cy="16" r="6"/><path d="M3 4l4 7M9 2l2 7M16 1l-1 8M23 4l-4 6" stroke="#222" stroke-width="2"/></svg>
    <svg class="lock2" viewBox="0 0 24 28"><use href="#openlock"/></svg>
    <div class="layer"><b>•Layer 1</b><b class="down"></b></div>
    <span class="message">No objects selected. Click, Shift+click, Alt+scroll mouse on top of objects, or drag around objects to select.</span>
    <div class="coords"><span>X:</span><span>146.68</span><span>Y:</span><span>300.84</span></div>
    <label class="lz">Z:</label>
    <div class="zoom-field"><span>35%</span><i><b class="up"></b><svg viewBox="0 0 24 24"><path d="M2 24L24 0M9 24L24 8M16 24l8-8" stroke="#999" stroke-width="2"/></svg></i></div>
  </footer>
</main>

<div class="desktop">
  <div class="dock">
    <svg class="app run" viewBox="0 0 88 96"><rect x="6" y="8" width="75" height="70" rx="4" fill="url(#finderR)" stroke="#b8c4d0"/><path d="M10 8h35q-7 20-7 40h11q-1 14 3 30H10q-4 0-4-4V12q0-4 4-4z" fill="url(#finderL)"/><path d="M27 27v5M60 27v5" stroke="#12283c" stroke-width="4" stroke-linecap="round"/><path d="M22 53q21 19 44 0" fill="none" stroke="#0e1c2c" stroke-width="3" stroke-linecap="round"/></svg>
    <svg class="app run" viewBox="0 0 88 96"><circle cx="44" cy="43" r="42" fill="#ffcd40"/><path d="M8.500 21A42 42 0 0 1 81 24H44a19 19 0 0 0-18 25z" fill="#db4437"/><path d="M8.500 21A42 42 0 0 0 43 85l17-32a19 19 0 0 1-34-2z" fill="#1da462"/><circle cx="44" cy="43" r="19" fill="#fff"/><circle cx="44" cy="43" r="15.500" fill="#4c8bf5"/></svg>
    <svg class="app" viewBox="0 0 88 96" fill="none" stroke-linecap="round" stroke-linejoin="round"><path d="M29 71l14-41" stroke="#0f66a6" stroke-width="14"/><path d="M64 68l9-50" stroke="#1176b8" stroke-width="14"/><path d="M44 31l18 38" stroke="#1c8ed0" stroke-width="14"/><path d="M11 15l15 56" stroke="#279fe0" stroke-width="17"/><path d="M74 18l-9 50" stroke="#279fe0" stroke-width="13"/></svg>
    <svg class="app" viewBox="0 0 88 96"><circle cx="44" cy="43" r="40.500" fill="#2fd566"/><path d="M19 29q27-7 53 7M22 43q23-6 45 7M24 56q19-5 37 6" fill="none" stroke="#191414" stroke-linecap="round" stroke-width="7"/></svg>
    <svg class="app run" viewBox="0 0 88 96"><path d="M39 3q5-5 10 2l33 34q6 8-6 12-10 3-9 5 6 3-6 8-2 7-8 9 1 8-6 9-8-3-8-9-6-5-1-10-7-3-12-6-16-5-13-10 8-2 12-4-18-3-22-8-2-5 2-9z" fill="url(#ink)"/><path d="M44 3l18 19-6 6-5-6-7 8-6-6-13 3z" fill="#f4f6fc"/><ellipse cx="23" cy="70" rx="5" ry="3.500"/><ellipse cx="78" cy="64" rx="6" ry="3.500" fill="#222"/><ellipse cx="71" cy="71" rx="3.500" ry="3"/></svg>
    <svg class="app run" viewBox="0 0 88 96"><ellipse cx="44" cy="74" rx="36" ry="3.500" fill="#c8c5c8"/><path d="M5.500 48.500a38.500 26.500 0 1 1 77 0a38.500 26.500 0 1 1-77 0zM13.500 46a33 22.500 0 0 0 66.500 2a33 22.500 0 0 0-66.500-2z" fill="url(#ring)" fill-rule="evenodd"/><path d="M73 10L17 76" stroke="#111" stroke-width="4"/><path d="M12 10h17l46 66H58z" fill="#000"/><path d="M73 10L46 43" stroke="#e1dee1" stroke-width="7"/><path d="M73 10L44 45" stroke="#222" stroke-width="4.500"/></svg>
    <i></i>
    <svg class="trash" viewBox="0 0 70 96"><path d="M6 14l8-8 9 3 6-6 7 4 8-3 8 4 8 2 4 10-30 5z" fill="#a6a6aa"/><path d="M12 14l8-6 7 9zM40 5l9 9-12 3z" fill="#fff"/><path d="M44 9l8 8-9 4z" fill="#3c5a9a"/><path d="M23 10h7l-3 6z" fill="#3fc3c8"/><path d="M14 12l4 8h-8zM33 10l4 10h-9zM55 10l5 7-9 3z" fill="#666"/><path d="M3 12q32 18 64 0l-7 68q-25 11-50 0z" fill="url(#bin)" stroke="#c6c6c8" fill-opacity=".93"/></svg>
  </div>
</div>
<script src="app.js"></script>
</body>
</html>
```
FILE: styles.css
```css
* { box-sizing: border-box; }
html, body { margin: 0; }
body { width: 2560px; height: 1600px; overflow: hidden; display: flex; flex-direction: column; background: #8a8a8a; font: 24px/30px "Noto Sans", "Open Sans", sans-serif; color: #2e3436; }
svg { display: block; flex: none; }
.defs { position: absolute; }
button { padding: 0; border: 2px solid #b6b6b3; border-radius: 7px; background: #d8d8d6; display: flex; align-items: center; justify-content: center; flex: none; }
hr { border: 0; margin: 0; flex: none; }

/* macOS menu bar */
.mac-bar { height: 44px; flex: none; display: flex; align-items: center; background: #f0f0f0; font: 27px/42px Inter, sans-serif; letter-spacing: .1px; color: #3c3c3c; fill: #3c3c3c; padding: 1px 46px 0 42px; white-space: nowrap; }
.apple { width: 26px; height: 32px; margin-bottom: 4px; }
.mac-menu { display: flex; gap: 37px; margin-left: 40px; flex: 1; }
.mac-menu b { font-weight: 700; letter-spacing: .6px; }
.mac-status { display: flex; align-items: center; }
.cloud { width: 40px; height: 28px; margin-right: 18px; }
.wifi { width: 40px; height: 30px; margin-right: 22px; }
.speaker { width: 16px; height: 24px; margin-right: 45px; }
.percent { width: 54px; font-size: 24px; letter-spacing: -1px; }
.battery { width: 48px; height: 26px; }
.clock { width: 266px; margin-left: 37px; letter-spacing: .12px; }
.user { width: 218px; font-weight: 500; letter-spacing: .25px; }
.search { width: 30px; height: 30px; margin-right: 30px; }
.list { width: 36px; height: 22px; }

/* window */
.window { width: 2557px; height: 1440px; flex: none; display: flex; flex-direction: column; background: #e8e8e6; border-radius: 10px 10px 0 0; position: relative; box-shadow: 0 2px 3px #222, 0 8px 20px rgba(0,0,0,.5); }
.titlebar { height: 44px; flex: none; display: flex; align-items: center; background: #f6f6f6; border-top: 2px solid #fcfcfc; border-bottom: 2px solid #d0d0ce; border-radius: 10px 10px 0 0; padding-left: 14px; }
.lights { display: flex; gap: 16px; width: 1130px; }
.lights i { width: 24px; height: 24px; border-radius: 50%; background: #dcdcdc; border: 2px solid #cfcfcf; }
.doc-title { display: flex; align-items: center; gap: 14px; font: 25px/36px Inter, sans-serif; letter-spacing: .25px; color: #5a5a5a; padding-top: 1px; }
.doc-title svg { width: 28px; height: 30px; }
.menubar { height: 46px; flex: none; display: flex; align-items: center; gap: 31.500px; padding-left: 12px; letter-spacing: .28px; border-bottom: 2px solid #d0d0ce; }
.commands, .controls { display: flex; align-items: center; padding-left: 6px; flex: none; }
.commands { height: 72px; }
.controls { height: 76px; padding-bottom: 1px; }
.commands > svg, .controls > svg:not(.lock) { width: 32px; height: 32px; margin: 0 12px; }
.commands hr, .controls hr { width: 24px; height: 32px; background: linear-gradient(#d0d0ce, #d0d0ce) 9px 0/2px 100% no-repeat; }
.controls hr { height: 36px; }
label { color: #999b98; font-size: 22px; flex: none; }
.lx { width: 47px; padding-left: 15px; }
.ly, .lw, .lh { padding-left: 19px; width: 51px; }
.lw { width: 55px; }
.lock { width: 24px; height: 28px; margin: 0 12px 0 19px; }
.spin { width: 151px; height: 54px; flex: none; border: 2px solid #b6b6b3; border-radius: 8px; background: #f3f3f1; display: flex; justify-content: space-between; color: #999b98; font-size: 22px; }
.spin span { padding: 8px 0 0 16px; }
.spin i, .slider i { width: 25px; border-left: 2px solid #dcdcda; background: linear-gradient(#dcdcda, #dcdcda) 0 50%/100% 2px no-repeat; display: flex; flex-direction: column; align-items: center; justify-content: space-around; }
.spin i::before, .slider i::before { content: ""; border: 8px solid transparent; border-top: 0; border-bottom: 10px solid #888a87; }
.spin i::after, .slider i::after { content: ""; border: 8px solid transparent; border-bottom: 0; border-top: 10px solid #888a87; }
.unit, .layer { display: flex; align-items: center; border: 2px solid #b6b6b3; border-bottom-color: #979793; border-radius: 6px; background: linear-gradient(#f0f0ee, #cfcfcd); }
.unit { width: 85px; height: 44px; margin-left: 5px; padding-left: 9px; gap: 10px; font-size: 21px; letter-spacing: -1.500px; font-weight: 500; }
.down { border: 10px solid transparent; border-top: 11px solid #2e3436; border-bottom: 0; }
.up { border: 9px solid transparent; border-bottom: 10px solid #2e3436; border-top: 0; }
.right { border: 10px solid transparent; border-left: 10px solid #2e3436; border-right: 0; }
.left { border: 10px solid transparent; border-right: 9px solid #2e3436; border-left: 0; }
.controls hr.last { width: 29px; background-position: 13px 0; }
.toggles { display: flex; gap: 4px; }
.toggles button { width: 52px; height: 56px; }
.toggles svg { width: 26px; height: 24px; }

/* work area */
.work { height: 1084px; flex: none; display: grid; grid-template-columns: 76px 1681px 729px 71px; }
.toolbox { display: flex; flex-direction: column; align-items: center; padding-top: 8px; }
.toolbox > div { width: 60px; height: 60px; margin: 2px 0; display: flex; align-items: center; justify-content: center; flex: none; }
.toolbox .on { border: 2px solid #b6b6b3; border-radius: 7px; background: #d8d8d6; }
.toolbox svg { width: 48px; height: 48px; }
.toolbox .right { margin: 52px 0 0 2px; }
.canvas-area { display: grid; grid-template-columns: 40px 1595px 5px 26px; grid-template-rows: 36px 1010px 4px 26px; }
.corner { display: flex; align-items: center; justify-content: center; }
.corner:first-child { padding-left: 4px; }
.corner svg { width: 22px; height: 24px; }
.zoom { grid-column: 4; }
.zoom svg { width: 26px; height: 26px; }
.ruler-h { width: 1595px; height: 36px; }
.ruler-v { width: 40px; height: 1010px; grid-column: 1; grid-row: 2; }
.ruler-h, .ruler-v { fill: #2e3436; font: 13.500px "DejaVu Sans", sans-serif; }
.ruler-h { font-size: 14.500px; letter-spacing: -.2px; }
.ruler-h text, .ruler-v text { fill: #3c4244; }
.canvas { width: 1595px; height: 1010px; background: #fff; grid-row: 2; grid-column: 2; }
.art { font: 28px "DejaVu Sans", sans-serif; fill: #000; }
.vscroll { grid-column: 4; grid-row: 2; background: #c3c4c3; border-left: 2px solid #b3b5b3; padding: 318px 6px 0; }
.vscroll i, .hscroll i, .pal-scroll i { display: block; background: #797c7c; border-radius: 6px; }
.vscroll i { height: 374px; }
.hscroll { grid-column: 2; grid-row: 4; background: #c3c4c3; border-top: 2px solid #b3b5b3; padding: 6px 83px 0 212px; }
.hscroll i { height: 12px; }
.cms { grid-column: 4; grid-row: 4; padding-left: 2px; }
.cms svg { width: 22px; height: 26px; }

/* fill and stroke dialog */
.dock-panel { border-left: 2px solid #b8b8b5; padding: 15px 4px 0 11px; height: 1081px; }
.panel-title { display: flex; align-items: center; height: 32px; margin-bottom: 13px; font-size: 26px; letter-spacing: -.1px; }
.panel-title > svg:first-child { width: 32px; height: 32px; }
.panel-title span { flex: 1; padding-left: 1px; }
.pbtn { width: 22px; height: 22px; margin-left: 34px; }
.pbtn:last-child { margin-right: 20px; }
.frame { width: 710px; height: 825px; border: 2px solid #b6b6b3; padding: 7px 7px; letter-spacing: .5px; }
.tabs { display: flex; align-items: flex-end; height: 49px; }
.tab { display: flex; align-items: center; gap: 9px; height: 46px; border: 2px solid #b6b6b3; border-bottom: 0; border-left: 0; border-radius: 0 8px 0 0; background: #f0f0f0; padding: 0 12px 0 8px; width: 202px; white-space: nowrap; }
.tab svg { width: 24px; height: 24px; }
.tab:last-child { width: 196px; }
.tab.active { width: 97px; height: 51px; margin-bottom: -2px; border-left: 2px solid #b6b6b3; border-radius: 8px 8px 0 0; background: #fff; padding-left: 12px; position: relative; }
.page { width: 694px; height: 608px; border: 2px solid #b6b6b3; background: #fff; padding: 16px 0 0 19px; }
.paints { display: flex; align-items: center; height: 60px; }
.paints > svg { width: 32px; height: 32px; margin: 0 16px; }
.paints svg.gap { width: 32px; margin: 0 14px 0 38px; }
.paints button { width: 53px; height: 60px; background: #f0f0f0; }
.paints button svg { width: 32px; height: 32px; }
.none { display: block; margin-top: 18px; letter-spacing: .85px; font-weight: 700; }
.slider { width: 691px; height: 61px; margin: 11px 0 0 1px; border: 2px solid #b6b6b3; border-radius: 8px; background: #f3f3f1; color: #999b98; display: flex; }
.slider.opacity { margin-top: 13px; }
.bar { flex: 1; display: flex; justify-content: space-between; align-items: center; padding: 0 23px 4px 12px; }
.bar span:last-child { letter-spacing: 1.400px; }
.slider i { width: 28px; }
.opacity .bar { background: #4a90d9; color: #fff; margin: 4px 7px 4px 4px; padding: 0 15px 4px 8px; }
.rule { height: 2px; background: #b6b6b3; margin: 11px 0 0 -2px; width: 714px; }

/* snap bar */
.snapbar { display: flex; flex-direction: column; align-items: center; padding: 8px 0 0 1px; }
.snapbar svg { width: 32px; height: 32px; margin: 12px 0; }
.nodes { display: flex; flex-direction: column; }
.nodes svg { margin: 11.500px 0; }
.snapbar button { width: 53px; height: 52px; margin: 2px 0; }
.snapbar hr { width: 32px; height: 24px; background: linear-gradient(#d0d0ce, #d0d0ce) 0 10px/100% 2px no-repeat; }
.snapbar hr.wide { height: 28px; background-position: 0 15px; }
.snapbar .right { margin-top: 21px; }

/* palette */
.palette { height: 26px; flex: none; display: flex; }
#swatches { width: 2532px; display: flex; overflow: hidden; }
#swatches i { width: 26.020px; height: 26px; flex: none; }
#swatches i:first-child { background: linear-gradient(to top right, transparent 47%, #7d1010 47% 53%, transparent 53%), linear-gradient(to bottom right, transparent 47%, #7d1010 47% 53%, transparent 53%), #fff; }
.palette .left { margin-left: 9px; }
.pal-scroll { width: 2534px; height: 26px; flex: none; margin-top: 4px; background: #c3c4c3; border-top: 2px solid #b3b5b3; padding: 6px 4px 0; }
.pal-scroll i { width: 558px; height: 12px; }

/* status bar */
.status { height: 62px; flex: none; display: flex; align-items: center; padding-top: 1px; }
.style-ind { width: 251px; display: grid; grid-template-columns: 138px 1fr; font-size: 20px; line-height: 28px; padding-left: 2px; }
.status label { color: #4c5254; }
.lo { width: 29px; }
.spin.small { width: 91px; }
.spin.small span { padding: 10px 0 0 18px; color: #a6a8a5; }
.status hr { width: 2px; height: 57px; margin: 4px 16px 0 8px; background: #d0d0ce; }
.eye { width: 26px; height: 28px; }
.lock2 { width: 24px; height: 28px; margin: 0 18px 0 31px; }
.layer { width: 165px; height: 54px; padding-left: 17px; gap: 20px; font-size: 21px; letter-spacing: .3px; }
.layer b:first-child { font-weight: 600; }
.message { width: 1628px; padding-left: 3px; white-space: nowrap; font-size: 25px; letter-spacing: .35px; }
.coords { width: 131px; height: 58px; margin-top: 4px; border-left: 2px solid #d0d0ce; display: grid; grid-template-columns: 38px 1fr; grid-auto-rows: 29px; font-size: 21px; line-height: 24px; padding-left: 4px; }
.lz { width: 25px; }
.zoom-field { width: 110px; height: 54px; border: 2px solid #b6b6b3; border-radius: 8px; background: #fff; display: flex; justify-content: space-between; color: #000; font-size: 21px; letter-spacing: -.5px; }
.zoom-field span { padding: 10px 0 0 30px; }
.zoom-field i { width: 28px; border-left: 2px solid #dcdcda; display: flex; flex-direction: column; align-items: center; background: linear-gradient(#dcdcda, #dcdcda) 0 25px/100% 2px no-repeat; padding-top: 8px; }
.zoom-field svg { width: 22px; height: 22px; margin-top: 10px; }

/* desktop and dock */
.desktop { flex: 1; display: flex; padding: 2px 0 0 916px; background: #d5d5d5; }
.dock { width: 728px; height: 114px; position: relative; border-radius: 10px 10px 0 0; background: #e1dee1; box-shadow: 0 0 60px rgba(0,0,0,.12), 0 0 2px #999; display: flex; padding: 11px 0 0 10px; }
.app { width: 88px; height: 96px; margin-right: 8px; }
.run { height: 104px; padding-bottom: 8px; background: radial-gradient(circle at 50% 50%, #666 3.500px, transparent 4.300px) 0 47px/88px 96px no-repeat; }
.dock > i { width: 2px; height: 84px; background: #bbb; margin: 5px 0 0 18px; }
.trash { width: 70px; height: 96px; margin-left: 33px; }
```
FILE: app.js
```js
// Default Inkscape palette, up to the last colour that fits the strip.
const palette = ('fff 000 1a1a1a 333 4d4d4d 666 808080 999 b3b3b3 ccc e6e6e6 ececec f2f2f2 f9f9f9 fff ' +
  '800000 f00 808000 ff0 008000 0f0 008080 0ff 000080 00f 800080 f0f ' +
  '2b0000 550000 800000 a00 d40000 f00 ff2a2a f55 ff8080 faa ffd5d5 ' +
  '280b0b 501616 782121 a02c2c c83737 d35f5f de8787 e9afaf f4d7d7 ' +
  '241c1c 483737 6c5353 916f6f ac9393 c8b7b7 e3dbdb ' +
  '2b1100 520 803300 a40 d45500 f60 ff7f2a f95 ffb380 fca ffe6d5 ' +
  '28170b 502d16 784421 a05a2c c87137 d38d5f deaa87 e9c6af f4e3d7 ' +
  '241f1c 483e37 6c5d53 917c6f ac9d93 c8beb7 e3dedb ' +
  '2b2200 540 806600 a80 d4aa00 fc0 ffd42a fd5 ffe680 fea fff6d5 ' +
  '28220b 504416 786721 a0892c c8ab37 d3bc5f').split(' ');
document.getElementById('swatches').innerHTML =
  palette.map((c, i) => i ? `<i style="background:#${c}"></i>` : '<i></i>').join('');

// Ruler ticks: one every 5 mm, longer at 10 mm, full height at 50 mm.
const step = 13.365;
let h = '', v = '';
for (let n = -32; n <= 86; n++) {
  const x = Math.round(556.5 + n * step);
  if (x < 120 || x > 1709) continue;
  const top = n % 10 === 0 ? 286 : n % 2 === 0 ? 302 : 308;
  h += `<path d="M${x - 1} ${top}h2v${317 - top}h-2z"/>`;
  if (n % 10 === 0) h += `<text x="${x + 3}" y="301">${String(n * 5).replace('-', '−')}</text>`;
}
for (let n = -8; n <= 67; n++) {
  const y = Math.round(1219 - n * step);
  if (y < 322 || y > 1326) continue;
  const left = n % 10 === 0 ? 84 : n % 2 === 0 ? 100 : 106;
  v += `<path d="M${left} ${y - 1}h${115 - left}v2h-${115 - left}z"/>`;
  if (n % 10 === 0) String(n * 5).split('').forEach((d, i) => {
    v += `<text x="83.5" y="${y + 15 + i * 16}">${d}</text>`;
  });
}
v += '<text x="83.5" y="331">0</text>';
document.getElementById('ticks-h').innerHTML = h;
document.getElementById('ticks-v').innerHTML = v;
```
